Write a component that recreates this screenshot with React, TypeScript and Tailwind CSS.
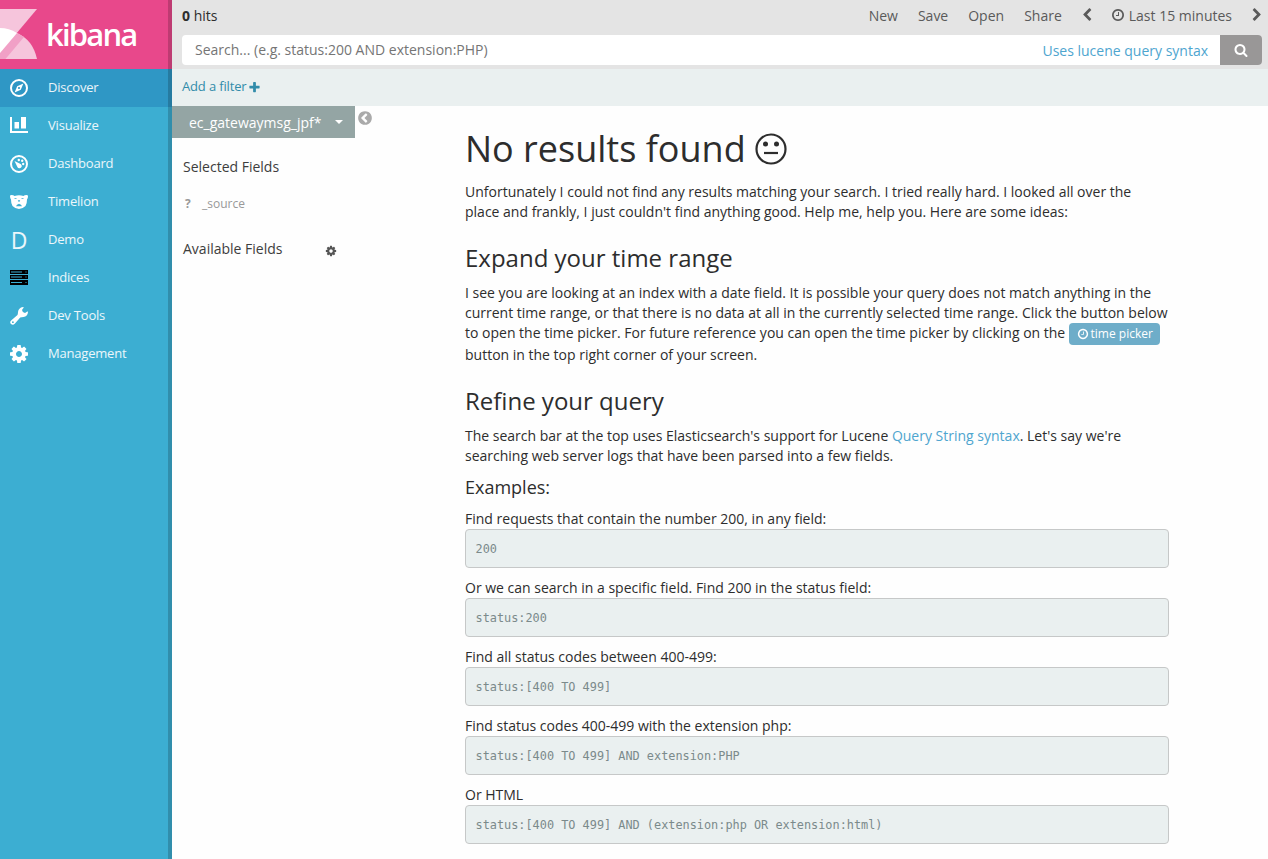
import React from "react";

const paths = {
  clock:
    "M1024 544v448q0 14-9 23t-23 9h-320q-14 0-23-9t-9-23v-64q0-14 9-23t23-9h224v-352q0-14 9-23t23-9h64q14 0 23 9t9 23zm416 352q0-148-73-273t-198-198-273-73-273 73-198 198-73 273 73 273 198 198 273 73 273-73 198-198 73-273zm224 0q0 209-103 385.5t-279.5 279.5-385.5 103-385.5-103-279.5-279.5-103-385.5 103-385.5 279.5-279.5 385.5-103 385.5 103 279.5 279.5 103 385.5z",
  collapse:
    "M1037 1395l102-102q19-19 19-45t-19-45l-307-307 307-307q19-19 19-45t-19-45l-102-102q-19-19-45-19t-45 19l-454 454q-19 19-19 45t19 45l454 454q19 19 45 19t45-19zm627-499q0 209-103 385.5t-279.5 279.5-385.5 103-385.5-103-279.5-279.5-103-385.5 103-385.5 279.5-279.5 385.5-103 385.5 103 279.5 279.5 103 385.5z",
  plus: "M1600 736v192q0 40-28 68t-68 28h-416v416q0 40-28 68t-68 28h-192q-40 0-68-28t-28-68v-416h-416q-40 0-68-28t-28-68v-192q0-40 28-68t68-28h416v-416q0-40 28-68t68-28h192q40 0 68 28t28 68v416h416q40 0 68 28t28 68z",
  search:
    "M1216 832q0-185-131.5-316.5t-316.5-131.5-316.5 131.5-131.5 316.5 131.5 316.5 316.5 131.5 316.5-131.5 131.5-316.5zm512 832q0 52-38 90t-90 38q-54 0-90-38l-343-342q-179 124-399 124-143 0-273.5-55.5t-225-150-150-225-55.5-273.5 55.5-273.5 150-225 225-150 273.5-55.5 273.5 55.5 225 150 150 225 55.5 273.5q0 220-124 399l343 343q37 37 37 90z",
  cog: "M1152 896q0-106-75-181t-181-75-181 75-75 181 75 181 181 75 181-75 75-181zm512-109v222q0 12-8 23t-20 13l-185 28q-19 54-39 91 35 50 107 138 10 12 10 25t-9 23q-27 37-99 108t-94 71q-12 0-26-9l-138-108q-44 23-91 38-16 136-29 186-7 28-36 28h-222q-14 0-24.5-8.5t-11.5-21.5l-28-184q-49-16-90-37l-141 107q-10 9-25 9-14 0-25-11-126-114-165-168-7-10-7-23 0-12 8-23 15-21 51-66.5t54-70.5q-27-50-41-99l-183-27q-13-2-21-12.5t-8-23.5v-222q0-12 8-23t19-13l186-28q14-46 39-92-40-57-107-138-10-12-10-24 0-10 9-23 26-36 98.5-107.5t94.5-71.5q13 0 26 10l138 107q44-23 91-38 16-136 29-186 7-28 36-28h222q14 0 24.5 8.5t11.5 21.5l28 184q49 16 90 37l142-107q9-9 24-9 13 0 25 10 129 119 165 170 7 8 7 22 0 12-8 23-15 21-51 66.5t-54 70.5q26 50 41 98l183 28q13 2 21 12.5t8 23.5z",
  left: "M1427 301l-531 531 531 531q19 19 19 45t-19 45l-166 166q-19 19-45 19t-45-19l-742-742q-19-19-19-45t19-45l742-742q19-19 45-19t45 19l166 166q19 19 19 45t-19 45z",
  right:
    "M1363 877l-742 742q-19 19-45 19t-45-19l-166-166q-19-19-19-45t19-45l531-531-531-531q-19-19-19-45t19-45l166-166q19-19 45-19t45 19l742 742q19 19 19 45t-19 45z",
};

function Glyph({ name, className }: { name: keyof typeof paths; className: string }) {
  return (
    <svg viewBox="0 0 1792 1792" fill="currentColor" className={className}>
      <path d={paths[name]} />
    </svg>
  );
}

const icon = "block h-[18px] w-[18px]";

const navItems: { label: string; icon: React.ReactNode }[] = [
  {
    label: "Discover",
    icon: (
      <svg viewBox="0 0 18 18" className={icon}>
        <circle cx="9" cy="9" r="8" fill="none" stroke="white" strokeWidth="2" />
        <path fillRule="evenodd" fill="white" d="M13.4 4.6 10.8 10.8 4.6 13.4 7.2 7.2zM9 7.9a1.1 1.1 0 1 0 0 2.2 1.1 1.1 0 0 0 0-2.2z" />
      </svg>
    ),
  },
  {
    label: "Visualize",
    icon: (
      <svg viewBox="0 0 18 18" className={icon} fill="white">
        <path d="M0 0h2v14h16v2H0zM4.500 5h4.500v6.500H4.500zM11 0h5v11.500h-5z" />
      </svg>
    ),
  },
  {
    label: "Dashboard",
    icon: (
      <svg viewBox="0 0 18 18" className={icon}>
        <circle cx="9" cy="9" r="8" fill="none" stroke="white" strokeWidth="2" />
        <path fill="white" d="M4.500 6 10.600 9A2.300 2.300 0 1 1 7.500 12.200z" />
        <circle cx="8.800" cy="5" r="1.200" fill="white" />
        <circle cx="12.200" cy="5.800" r="1.200" fill="white" />
        <circle cx="13.200" cy="9" r="1.200" fill="white" />
      </svg>
    ),
  },
  {
    label: "Timelion",
    icon: (
      <svg viewBox="0 0 18 18" className={icon}>
        <path fill="white" d="M0 3Q0 2 1.5 2Q3.5 2 4.5 3Q9 1.6 13.5 3Q14.5 2 16.5 2Q18 2 18 3.2Q18 5 17 6.5Q17 11 15.5 13Q12.5 16 9 16Q5.5 16 2.5 13Q1 11 1 6.5Q0 5 0 3z" />
        <path fill="#3caed2" d="M4.500 5.200h2v.9h-2zM11.500 5.200h2v.9h-2zM7.800 7.300h2.400l-.7 1.500h-1zM6 13.300Q6.500 11.300 9 10.800Q11.500 11.300 12 13.300z" />
      </svg>
    ),
  },
  {
    label: "Demo",
    icon: <span className="block w-[18px] text-center text-[23px] leading-[20px] text-white/90">D</span>,
  },
  {
    label: "Indices",
    icon: (
      <svg viewBox="0 0 18 18" className={icon}>
        <path fill="#000" d="M0 1h18v4H0zM0 6h18v4H0zM0 11h18v5H0z" />
        <path fill="#3caed2" opacity=".7" d="M0 5h18v1H0zM0 10h18v1H0z" />
        <path fill="#3caed2" d="M1 2.500h11v1H1zM1 7.500h11v1H1zM1 13h11v1H1zM15.500 2.500h1v1h-1zM15.500 7.500h1v1h-1zM15.500 13h1v1h-1z" />
      </svg>
    ),
  },
  {
    label: "Dev Tools",
    icon: (
      <svg viewBox="0 0 18 18" className={icon}>
        <path
          fill="white"
          fillRule="evenodd"
          d="M13 0Q14 0 13.6.7L12 3Q12.300 5.600 15 6L17.300 4.600Q18 4.200 18 5Q17.600 9.500 13.500 10Q11.500 10 10.200 10.600L5 16.600Q3 18.800 1 17.100Q-.8 15 1.400 13.200L7.500 8Q8 6.700 8 5Q8.500.8 13 0zM2.900 14.300a.9.9 0 1 0 0 1.800.9.9 0 0 0 0-1.800z"
        />
      </svg>
    ),
  },
  {
    label: "Management",
    icon: (
      <svg viewBox="128 128 1536 1536" className={icon} fill="white">
        <path d={paths.cog} />
      </svg>
    ),
  },
];

const examples = [
  ["Find requests that contain the number 200, in any field:", "200"],
  ["Or we can search in a specific field. Find 200 in the status field:", "status:200"],
  ["Find all status codes between 400-499:", "status:[400 TO 499]"],
  ["Find status codes 400-499 with the extension php:", "status:[400 TO 499] AND extension:PHP"],
  ["Or HTML", "status:[400 TO 499] AND (extension:php OR extension:html)"],
];

function Sidebar() {
  return (
    <aside className="relative flex w-[172px] shrink-0 flex-col bg-[#3caed2]">
      <div className="flex h-[69px] shrink-0 bg-[#e8488b]">
        <svg viewBox="0 0 40 69" className="h-[69px] w-[40px] shrink-0">
          <path fill="#f6c5dc" d="M0 9H37L0 53z" />
          <path fill="#f6c5dc" d="M17 33Q33 40 37 59H0V53z" />
          <path fill="#f1a0c6" d="M17 33L24 37L5.500 59H0V53z" />
          <path fill="#fff" d="M0 28Q9 28 17 33L0 53z" />
        </svg>
        <span className="ml-[6px] mt-[11px] text-[31px] font-semibold leading-[46px] tracking-[-1.8px] text-white">kibana</span>
      </div>
      <nav>
        {navItems.map((item, i) => (
          <div key={item.label} className={`flex h-[38px] items-center ${i === 0 ? "bg-[#2f97c5]" : ""}`}>
            <span className="flex w-[38px] justify-center">{item.icon}</span>
            <span className="ml-[10px] pb-px text-[13px] tracking-[-0.2px] text-white/90">{item.label}</span>
          </div>
        ))}
      </nav>
      <div className="absolute inset-y-0 right-0 w-[4px] bg-black/18" />
    </aside>
  );
}

function TopBar() {
  return (
    <header className="h-[69px] bg-[#e4e4e4] text-[14px]">
      <div className="flex h-[35px] items-center pb-[5px] pl-[10px]">
        <div className="grow text-[#2d2d2d]">
          <b>0</b> hits
        </div>
        <div className="flex items-center text-[#5a5a5a]">
          <span className="mr-5">New</span>
          <span className="mr-5">Save</span>
          <span className="mr-5">Open</span>
          <span className="mr-[18px]">Share</span>
          <Glyph name="left" className="mr-[17px] h-[14px] w-[14px]" />
          <Glyph name="clock" className="mr-[4px] h-[14px] w-[14px]" />
          <span className="mr-[18px]">Last 15 minutes</span>
          <Glyph name="right" className="mr-[4px] h-[14px] w-[14px]" />
        </div>
      </div>
      <div className="ml-[10px] mr-[6px] flex h-[30px] overflow-hidden rounded-[4px] bg-white">
        <span className="grow pl-[13px] leading-[29px] text-[#757575]">Search... (e.g. status:200 AND extension:PHP)</span>
        <span className="pr-[12px] leading-[31px] text-[#4ea5cf]">Uses lucene query syntax</span>
        <span className="flex w-[42px] items-center justify-center bg-[#999797] text-white">
          <Glyph name="search" className="h-[14px] w-[14px]" />
        </span>
      </div>
    </header>
  );
}

function Fields() {
  return (
    <section className="w-[183px] shrink-0 text-[14px] text-[#3d3d3d]">
      <div className="flex h-[32px] items-center bg-[#94a5a4] pl-[17px] text-white">
        <span className="w-[146px]">ec_gatewaymsg_jpf*</span>
        <svg viewBox="0 0 8 4" className="h-[4px] w-[8px]" fill="white">
          <path d="M0 0h8L4 4z" />
        </svg>
      </div>
      <div className="pl-[11px] pt-[19px] leading-[20px]">Selected Fields</div>
      <div className="flex pl-[12px] pt-[17px] text-[12px] leading-[20px] text-[#999]">
        <span className="w-[18px] pl-px font-bold">?</span>
        <span>_source</span>
      </div>
      <div className="flex items-center pl-[11px] pt-[25px] leading-[20px]">
        <span className="w-[142px]">Available Fields</span>
        <Glyph name="cog" className="mt-[3px] h-[12px] w-[12px] text-[#555]" />
      </div>
    </section>
  );
}

function NoResults() {
  return (
    <main className="ml-[93px] w-[704px] text-[14px] leading-[20px] text-[#2d2d2d]">
      <h1 className="mt-[23px] flex h-[40px] items-center text-[36px] leading-[40px]">
        <span>No results found</span>
        <svg viewBox="0 0 32 32" className="ml-[9px] h-[32px] w-[32px]" fill="none" stroke="currentColor" strokeWidth="2.2">
          <circle cx="16" cy="16" r="14.500" />
          <circle cx="10.500" cy="11" r="2.500" fill="currentColor" stroke="none" />
          <circle cx="21.500" cy="11" r="2.500" fill="currentColor" stroke="none" />
          <path d="M9 20h14" />
        </svg>
      </h1>
      <p className="mt-[13px]">
        Unfortunately I could not find any results matching your search. I tried really hard. I looked all over the
        <br />
        place and frankly, I just couldn't find anything good. Help me, help you. Here are some ideas:
      </p>
      <h2 className="mt-[23px] text-[24px] leading-[26px]">Expand your time range</h2>
      <div className="mt-[12px] whitespace-nowrap">
        <p>
          I see you are looking at an index with a date field. It is possible your query does not match anything in the
          <br />
          current time range, or that there is no data at all in the currently selected time range. Click the button below
        </p>
        <p className="flex h-[22px]">
          <span>to open the time picker. For future reference you can open the time picker by clicking on the</span>
          <span className="ml-[4px] flex h-[22px] w-[91px] items-center justify-center gap-[2px] rounded-[4px] bg-[#6eadc9] text-[12px] font-medium text-white">
            <Glyph name="clock" className="h-[12px] w-[12px]" />
            time picker
          </span>
        </p>
        <p>button in the top right corner of your screen.</p>
      </div>
      <h2 className="mt-[23px] text-[24px] leading-[26px]">Refine your query</h2>
      <p className="mt-[12px] whitespace-nowrap">
        The search bar at the top uses Elasticsearch's support for Lucene{" "}
        <span className="text-[#4ea5cf]">Query String syntax</span>. Let's say we're
        <br />
        searching web server logs that have been parsed into a few fields.
      </p>
      <h3 className="mb-[12px] mt-[11px] text-[18px] leading-[20px]">Examples:</h3>
      {examples.map(([text, query]) => (
        <div key={text} className="mb-[10px]">
          <p>{text}</p>
          <pre className="h-[39px] rounded-[4px] border border-[#c6c8c8] bg-[#eaf0f0] pl-[9.5px] font-['DejaVu_Sans_Mono',monospace] text-[11.87px] leading-[39px] text-[#7b8a8b]">
            {query}
          </pre>
        </div>
      ))}
    </main>
  );
}

export default function App() {
  return (
    <div className="flex h-[859px] w-[1268px] overflow-hidden bg-[#fefefe] font-['Open_Sans',sans-serif]">
      <Sidebar />
      <div className="flex min-w-0 grow flex-col">
        <TopBar />
        <div className="flex h-[37px] shrink-0 items-center bg-[#eaf0f0] pb-px pl-[10px] text-[13px] tracking-[-0.15px] text-[#328caa]">
          Add a filter
          <Glyph name="plus" className="ml-px h-[13px] w-[13px]" />
        </div>
        <div className="flex">
          <Fields />
          <div className="w-0">
            <Glyph name="collapse" className="ml-[2px] mt-[4px] h-[16px] w-[16px] text-[#aaa]" />
          </div>
          <div className="ml-[17px]">
            <NoResults />
          </div>
        </div>
      </div>
    </div>
  );
}
